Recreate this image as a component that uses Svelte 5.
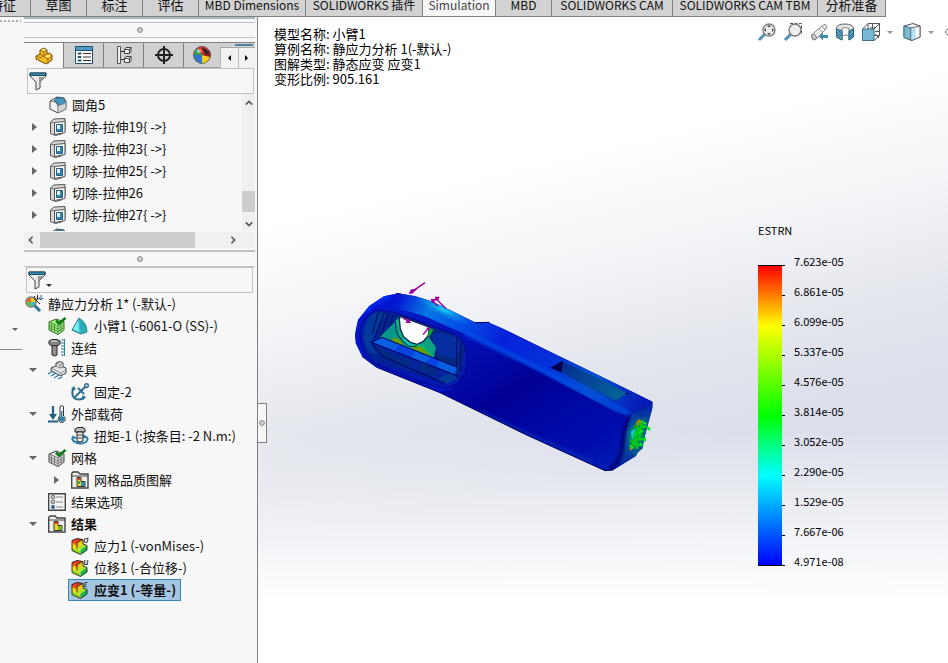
<script>
  const commands = [
    { label: '特征', w: 31, cut: true },
    { label: '草图', w: 56 },
    { label: '标注', w: 56 },
    { label: '评估', w: 56 },
    { label: 'MBD Dimensions', w: 107, latin: true },
    { label: 'SOLIDWORKS 插件', w: 117, latin: true },
    { label: 'Simulation', w: 73, active: true, latin: true },
    { label: 'MBD', w: 56, latin: true },
    { label: 'SOLIDWORKS CAM', w: 121, latin: true },
    { label: 'SOLIDWORKS CAM TBM', w: 145, latin: true },
    { label: '分析准备', w: 68 }
  ];
  const managerTabs = [
    { icon: 'part', name: 'FeatureManager' },
    { icon: 'props', name: 'PropertyManager' },
    { icon: 'config', name: 'ConfigurationManager' },
    { icon: 'target', name: 'DimXpertManager' },
    { icon: 'ball', name: 'DisplayManager' }
  ];
  const features = [
    { label: '圆角5', icon: 'fillet' },
    { label: '切除-拉伸19{ ->}', icon: 'cut', arrow: true },
    { label: '切除-拉伸23{ ->}', icon: 'cut', arrow: true },
    { label: '切除-拉伸25{ ->}', icon: 'cut', arrow: true },
    { label: '切除-拉伸26', icon: 'cut', arrow: true },
    { label: '切除-拉伸27{ ->}', icon: 'cut', arrow: true },
    { label: '', icon: 'fillet' }
  ];
  const study = [
    { label: '静应力分析 1* (-默认-)', level: 0, icons: ['study'] },
    { label: '小臂1 (-6061-O (SS)-)', level: 1, icons: ['meshgreen', 'solid'] },
    { label: '连结', level: 1, icons: ['bolt'] },
    { label: '夹具', level: 1, icons: ['fixture'], arrow: 'down' },
    { label: '固定-2', level: 2, icons: ['anchor'] },
    { label: '外部载荷', level: 1, icons: ['load'], arrow: 'down' },
    { label: '扭矩-1 (:按条目: -2 N.m:)', level: 2, icons: ['torque'] },
    { label: '网格', level: 1, icons: ['mesh'], arrow: 'down' },
    { label: '网格品质图解', level: 2, icons: ['folderq'], arrow: 'right' },
    { label: '结果选项', level: 1, icons: ['options'] },
    { label: '结果', level: 1, icons: ['folder'], arrow: 'down', bold: true },
    { label: '应力1 (-vonMises-)', level: 2, icons: ['plotσ'] },
    { label: '位移1 (-合位移-)', level: 2, icons: ['plotu'] },
    { label: '应变1 (-等量-)', level: 2, icons: ['plotε'], bold: true, selected: true }
  ];
  const scale = ['7.623e-05', '6.861e-05', '6.099e-05', '5.337e-05', '4.576e-05', '3.814e-05', '3.052e-05', '2.290e-05', '1.529e-05', '7.667e-06', '4.971e-08'];
</script>

{#snippet icon(name)}
  <svg class="ico" viewBox="0 0 18 18" aria-hidden="true">
    {#if name === 'part'}
      <path d="M1 9l4-2V3l4-2 3 2v4l2-1 3 2v5l-6 4L1 12z" fill="#f4bd22" stroke="#6e4b0c" />
      <path d="M5 7l4 2.500 4 2.500v5M13 12l4-3M5 3l4 2 3-2M9 5v4l3-2M1 9l4 2 4-2" fill="none" stroke="#9a6a0c" />
      <path d="M6 3l3-1.500L11 3 9 4zM9.500 9L12 8l4 .5-3 2.500z" fill="#ffe680" />
    {:else if name === 'props'}
      <path d="M.5.5h17v17H.5z" fill="#fff" stroke="#24506a" />
      <path d="M1 1h16v3H1z" fill="#4a9cc6" /><path d="M1 4.500h16" stroke="#24506a" />
      <path d="M3 7h3v1H3zM3 10.500h3v1H3zM3 14h3v1H3z" fill="#4a9cc6" stroke="#24506a" />
      <path d="M8 7.500h8M8 11h8M8 14.500h8" stroke="#333" />
    {:else if name === 'config'}
      <path d="M2.500 5.500h7M2.500 13.500h7" stroke="#333" fill="none" />
      <path d="M2.500.5h3v17h-3z" fill="#eee" stroke="#555" />
      <path d="M9.500 3.500l1.500-2h5v4l-1.500 2h-5zM9.500 3.500h5v4M14.500 3.500l1.500-2M9.500 12.500l1.500-2h5v4l-1.500 2h-5zM9.500 12.500h5v4M14.500 12.500l1.500-2" fill="#eee" stroke="#444" />
    {:else if name === 'target'}
      <circle cx="9" cy="9" r="6" fill="none" stroke="#222" stroke-width="2" /><path d="M9 0v18M0 9h18" stroke="#222" stroke-width="2" />
    {:else if name === 'ball'}
      <circle cx="9" cy="9" r="8.500" fill="#2b63b4" />
      <path d="M9 9L4 2A8.500 8.500 0 0 1 16 4z" fill="#e0312a" /><path d="M9 9l7-5a8.500 8.500 0 0 1 0 10z" fill="#8c2020" /><path d="M9 9L4 2a9 9 0 0 0-3 7z" fill="#31a245" /><path d="M9 9L1 9a8.500 8.500 0 0 0 8 8.500z" fill="#3477c8" /><path d="M9 9v8.500A8.500 8.500 0 0 0 17 11z" fill="#f6cc1c" />
      <path d="M9 2q5 0 7 6-5 0-7-6" fill="#222" /><ellipse cx="6" cy="5" rx="2.500" ry="2" fill="#fff" opacity=".5" /><circle cx="9" cy="9" r="8.500" fill="none" stroke="#555" stroke-width=".7" />
    {:else if name === 'fillet'}
      <path d="M1 5l7-4 7 1 2 4v7l-8 4-8-4z" fill="#f1f1f1" stroke="#444" />
      <path d="M8 2l5-.5 4 4-1 2-7 2q0-3-4-5z" fill="#4597be" stroke="#285d78" /><path d="M1 5q7 0 8 5v7" fill="none" stroke="#666" /><path d="M9 10l8-4v7l-8 4z" fill="#bbb" opacity=".55" />
    {:else if name === 'cut'}
      <path d="M1.500 4L5 1l11-.5v12L12.500 16l-6 1.500-5-2z" fill="#d6d6d6" stroke="#555" /><path d="M1.500 4l4 1 .5 12" fill="none" stroke="#777" />
      <path d="M5.500 4.500l10.500-1v11l-10.500 2z" fill="#fdfdfd" stroke="#555" /><path d="M7.500 6.500h6v7h-6z" fill="#2f86b3" stroke="#245f80" /><path d="M8 7h3v4H8z" fill="#e6f3f8" />
    {:else if name === 'study'}
      <path d="M9 10l6 6" stroke="#2e7399" stroke-width="3" /><circle cx="6" cy="7" r="5" fill="#f5cf1a" stroke="#777" stroke-width="1.500" /><path d="M2 7a4 4 0 0 1 4-4v4z" fill="#f06030" /><path d="M6 7h4a4 4 0 0 1-4 4z" fill="#33bccb" /><path d="M2 7h4v4a4 4 0 0 1-4-4" fill="#62c13c" />
      <path d="M9 1l2 4 4 4M11 5l4-2M12.500 0v4" stroke="#222" fill="none" /><path d="M16 0v5M14 3l2 2 2-2" stroke="#24688c" fill="none" />
    {:else if name === 'meshgreen' || name === 'mesh'}
      {@const gray = name === 'mesh'}
      <path d="M1 5l7-3 8 3v8l-6 4.500-9-4.500z" fill={gray ? '#ddd' : '#a8f08c'} stroke={gray ? '#444' : '#347323'} />
      <path d="M1 8l9 4 6-4M1 10.500l9 4 6-4M3.500 6v8M6.500 7v9M10 9v8M13 7v8M1 5l9 4 6-4" fill="none" stroke={gray ? '#666' : '#347f29'} stroke-width=".8" />
      <path d="M8 3.500l3 3 6.500-5.500" fill="none" stroke="#087d12" stroke-width="2.500" />
    {:else if name === 'solid'}
      <path d="M8 1L1 13l9 4 6-2q0-9-8-14" fill="#35c8d2" stroke="#1d6f82" /><path d="M8 1l2 16 6-2Q15 6 8 1" fill="#2aa9b9" /><path d="M7 4l-5 8 6 3z" fill="#83eef0" />
    {:else if name === 'bolt'}
      <path d="M1 2l3-1.500h5L12 2v3L9 7H4L1 5z" fill="#888" stroke="#222" /><path d="M4 7h5v9l-2 1-3-1z" fill="#ddd" stroke="#222" /><path d="M4 9h5M4 11h5M4 13h5M4 15h5" stroke="#444" /><path d="M3 2h6" stroke="#eee" /><path d="M16.500 0v17M13 1h3M13 4h3M13 7h3M13 10h3M13 13h3M13 16h3" stroke="#2e7b9c" />
    {:else if name === 'fixture'}
      <path d="M3 7l5-2V2l4-1.500L15 2v4l3 1v5l-5 3-10-5z" fill="#e4e4e4" stroke="#444" /><path d="M3 7l10 5 5-3M8 5l4 2 3-1M8 2l4 2 3-2M12 4v3M13 12v3" fill="none" stroke="#777" stroke-width=".8" /><path d="M0 13l5-3M3 15l5-3M6 17l5-3M10 18l4-2" stroke="#257aa2" stroke-width="1.200" />
    {:else if name === 'anchor'}
      <path d="M2.500 5Q0 11 3 15q4 3 10 0M3 15L15 3M7 5l6 6" fill="none" stroke="#2b6d91" stroke-width="2" /><circle cx="15.500" cy="2.500" r="1.800" fill="#fff" stroke="#2b6d91" stroke-width="1.500" /><path d="M0 6l3-3 2 4zM11 12l4 2-3 3z" fill="#2b6d91" />
    {:else if name === 'load'}
      <path d="M5 1v10M0 16.500h10" stroke="#225e80" stroke-width="2.200" /><path d="M1 9h8l-4 6z" fill="#225e80" /><path d="M12 2a1.800 1.800 0 0 1 3.500 0v9a3.500 3.500 0 1 1-3.500 0z" fill="#fff" stroke="#333" /><circle cx="13.700" cy="14" r="2.800" fill="#2e82ab" /><path d="M13.700 6v8" stroke="#2e82ab" stroke-width="1.500" />
    {:else if name === 'torque'}
      <path d="M3 9q-4 3 1 6 6 3 11 0 4-4-2-6M1 10l4 1M12 8l2 3" fill="none" stroke="#2980a9" stroke-width="2" /><path d="M4 2l3-1.500h5L14 2v3H4z" fill="#bbb" stroke="#222" /><path d="M6 5h6v9l-3 1-3-1z" fill="#eee" stroke="#222" /><path d="M6 8h6M6 11h6" stroke="#444" />
    {:else if name === 'folder' || name === 'folderq'}
      <path d="M.7 2.500L2 1h5l2 2h8v14H.7z" fill="#eee" stroke="#444" stroke-width="1.400" /><path d="M1 5h16" stroke="#444" /><path d="M6 6.500h4v4h4v5H6z" fill="#f5d520" stroke="#333" /><path d="M6.500 7h3v2h-3z" fill="#e73519" /><path d="M10 11h3.500v4H10z" fill={name === 'folderq' ? '#2993c4' : '#70bc29'} />{#if name === 'folderq'}<path d="M7 10h2v3H7z" fill="#45ac2c" />{/if}
    {:else if name === 'options'}
      <path d="M.7.7h16.600v16.600H.7z" fill="#f3f3f3" stroke="#444" stroke-width="1.400" /><path d="M8 4h7M8 9h7M8 14h7" stroke="#888" /><circle cx="5" cy="4" r="1.800" fill="#ccc" stroke="#666" /><circle cx="5" cy="9" r="1.800" fill="#ccc" stroke="#666" /><circle cx="5" cy="14" r="2" fill="#28658b" />
    {:else if name.startsWith('plot')}
      <path d="M1 3.500L6 1.500l6 1L6 5.500z" fill="#f03818" />
      <path d="M6 5.500l6-3V7l-6 4.500z" fill="#f2c516" />
      <path d="M1 3.500l5 2v6l3.500 1.500v4.500L1 13.500z" fill="#f5dc16" />
      <path d="M1 3.500l5 2v2l-5-2z" fill="#ee3214" /><path d="M1 5.500l5 2v1.500l-5-2z" fill="#f49014" /><path d="M1 10.500l8.500 4v3L1 13.500z" fill="#8ddc1e" />
      <path d="M6 11.500L12 7l4 1.500-6.500 4.500z" fill="#a5e61c" /><path d="M9.500 13L16 8.500v4.500l-6.500 4.500z" fill="#18b444" />
      <path d="M1 3.500L6 1.500l6 1V7l4 1.500V13l-6.500 4.500L1 13.500zM6 11.500V5.500l6-3" fill="none" stroke="#222" stroke-width=".9" />
      <text x="12.500" y="6" class="greek">{name.slice(4)}</text>
    {:else if name === 'funnel'}
      <path d="M1 1h16v3l-6 6v6l-4 2v-8L1 4z" fill="#e9e9e9" stroke="#444" /><path d="M1 1h16v2.500H1z" fill="#3c8fb8" stroke="#174c65" /><path d="M10 5v11l1-1v-5l5-5z" fill="#999" />
    {:else if name === 'zoomfit' || name === 'zoomarea'}
      {#if name === 'zoomarea'}<path d="M6 .5h11.500V12" fill="none" stroke="#555" stroke-dasharray="3 1.500" />{/if}
      <path d="M1 17l6-6" stroke="#4e93b6" stroke-width="3" /><circle cx="11" cy="7" r="6" fill="#eee" stroke="#777" stroke-width="1.300" />
      {#if name === 'zoomfit'}<path d="M11 2l2 2H9zM11 12l2-2H9zM6 7l2-2v4zM16 7l-2-2v4z" fill="#444" />{/if}
    {:else if name === 'prev'}
      <path d="M1.500 12L12 3l3-2 2 3-2 3-9 9-3 1z" fill="#f2f2f2" stroke="#888" /><path d="M9 6l3 3M12 3l3 4" stroke="#999" /><ellipse cx="4" cy="14" rx="2" ry="3" fill="#ccc" stroke="#888" transform="rotate(-35 4 14)" /><path d="M9 13.500l4-4v2.500h5v3h-5v2.500z" fill="#428caf" />
    {:else if name === 'section'}
      <path d="M.5 5q1-4 8.500-4t8.500 4v9L13 17V7H6v10L.5 14z" fill="#e2e2e2" stroke="#666" /><path d="M6 5.500q3-2 7 0V13l-3-1-4 1z" fill="#f5f5f5" stroke="#888" /><path d="M.5 6L6 8v9l-5.500-3zM13 8l4.500-2v8L13 17z" fill="#67a9c8" stroke="#286887" /><path d="M1 10l4-3M1 13l5-4M2 15l4-4M13 11l4-4M13 14l4-4M14 15l3-3" stroke="#1c5977" stroke-width=".8" />
    {:else if name === 'orient'}
      <path d="M.5 6L6 .5h11.500v12L12 17.500M12 6l5.500-5.500M6 .5V6M10.500 1v5M8 4l2.500 2L13 4M12 12.500h5.500M13 8.500h4M13 11l4 4" fill="none" stroke="#555" /><path d="M.5 6h11.500v11.500H.5z" fill="#7ab9d6" stroke="#386f89" />
    {:else if name === 'display'}
      <path d="M1 3l9-2.500 7 2.500v11l-8 3.500-8-3z" fill="#eee" stroke="#555" /><path d="M1 3l7 2v12l-7-2.500z" fill="#7cbad6" stroke="#3c748e" /><path d="M8 5l9-2v11l-9 3.500z" fill="#f8f8f8" stroke="#666" /><path d="M8.500 5.500l4-1v11l-4 1.500z" fill="#b5def0" />
    {/if}
  </svg>
{/snippet}

<div class="app">
  <nav class="commands" aria-label="CommandManager">
    {#each commands as c}
      <button class:active={c.active} class:cut={c.cut} class:latin={c.latin} style:width="{c.w}px">{c.label}</button>
    {/each}
  </nav>
  <div class="work">
    <aside class="gutter">
      <div class="grip"></div>
      <i class="tri down"></i>
      <div class="rule"></div>
    </aside>
    <section class="panel">
      <div class="topline"></div>
      <div class="splitter first"><i></i></div>
      <div class="mtabs">
        {#each managerTabs as t, i}
          <button class:active={i === 0} aria-label={t.name}>{@render icon(t.icon)}</button>
        {/each}
        <div class="more"><span class="peek"></span>
          <div class="arrows"><button aria-label="Previous tab"><i class="tri left"></i></button><button aria-label="Next tab"><i class="tri right dark"></i></button></div>
        </div>
      </div>
      <label class="filter upper">{@render icon('funnel')}<input aria-label="Filter features" /></label>
      <div class="featurebox">
        <ul class="features">
          {#each features as f}
            <li>
              <span class="twist">{#if f.arrow}<i class="tri right"></i>{/if}</span>
              <button class="item">{@render icon(f.icon)}<span>{f.label}</span></button>
            </li>
          {/each}
        </ul>
        <div class="vbar">
          <svg viewBox="0 0 10 6"><path d="M1 5l4-4 4 4" /></svg>
          <div class="thumb"></div>
          <svg viewBox="0 0 10 6"><path d="M1 1l4 4 4-4" /></svg>
        </div>
      </div>
      <div class="hbar">
        <svg viewBox="0 0 6 10"><path d="M5 1L1 5l4 4" /></svg>
        <div class="thumb"></div>
        <svg viewBox="0 0 6 10"><path d="M1 1l4 4-4 4" /></svg>
      </div>
      <div class="splitter second"><i></i></div>
      <label class="filter lower">{@render icon('funnel')}<i class="tri down dark"></i><input aria-label="Filter study" /></label>
      <ul class="study">
        {#each study as s}
          <li class="l{s.level}">
            {#if s.level}<span class="twist">{#if s.arrow}<i class="tri {s.arrow}"></i>{/if}</span>{/if}
            <button class="item" class:bold={s.bold} class:selected={s.selected}>
              {#each s.icons as n}{@render icon(n)}{/each}<span>{s.label}</span>
            </button>
          </li>
        {/each}
      </ul>
    </section>
    <main class="view">
      <button class="handle" aria-label="Collapse panel"><i></i></button>
      <div class="info">
        <div>模型名称: 小臂1</div>
        <div>算例名称: 静应力分析 1(-默认-)</div>
        <div>图解类型: 静态应变 应变1</div>
        <div>变形比例: 905.161</div>
      </div>
      <div class="hud">
        <button aria-label="Zoom to fit">{@render icon('zoomfit')}</button>
        <button aria-label="Zoom to area">{@render icon('zoomarea')}</button>
        <button aria-label="Previous view">{@render icon('prev')}</button>
        <button aria-label="Section view">{@render icon('section')}</button>
        <button class="menu" aria-label="View orientation">{@render icon('orient')}<i class="tri down"></i></button>
        <button class="menu" aria-label="Display style">{@render icon('display')}<i class="tri down"></i></button>
        <button aria-label="Hide or show items"><svg class="ico" viewBox="0 0 18 18"><path d="M1 9l4-5h8l4 5-4 5H5z" fill="#eee" stroke="#888" /><circle cx="9" cy="9" r="3" fill="#4c97bc" /></svg></button>
      </div>

      <svg class="model" viewBox="0 0 990 630" role="img" aria-label="应变1">
        <defs>
          <linearGradient id="front" x1="0" y1="0" x2="1" y2="1"><stop offset="0" stop-color="#0526dc" /><stop offset=".32" stop-color="#0512b8" /><stop offset=".55" stop-color="#000096" /><stop offset=".8" stop-color="#000eae" /><stop offset="1" stop-color="#0030ae" /></linearGradient>
          <linearGradient id="top" gradientUnits="userSpaceOnUse" x1="180" y1="70" x2="900" y2="420"><stop offset="0" stop-color="#0516d2" /><stop offset=".12" stop-color="#0876e4" /><stop offset=".25" stop-color="#0350e6" /><stop offset=".42" stop-color="#0523da" /><stop offset=".62" stop-color="#0530da" /><stop offset=".8" stop-color="#0554cf" /><stop offset="1" stop-color="#0519b6" /></linearGradient>
          <linearGradient id="slot" x1="0" y1="0" x2="1" y2=".5"><stop offset="0" stop-color="#032c91" /><stop offset="1" stop-color="#06609a" /></linearGradient>
          <linearGradient id="end" x1="0" y1="0" x2="0" y2="1"><stop offset="0" stop-color="#0418a8" /><stop offset=".45" stop-color="#046b96" /><stop offset="1" stop-color="#0319a1" /></linearGradient>
          <radialGradient id="hot"><stop offset="0" stop-color="#14dcec" /><stop offset="1" stop-color="#067ee4" stop-opacity="0" /></radialGradient>
          <filter id="soft"><feGaussianBlur stdDeviation="5" /></filter>
          <clipPath id="body"><path d="M45 192L54 150 88 108 132 79 175 70 225 78 275 94 330 120 405 157 445 157 490 176 640 250 730 293 862 358 938 395 938 412 914 500 888 558 820 600 795 602 560 495 300 368 110 292 66 258 47 220Z" /></clipPath>
        </defs>
        <g clip-path="url(#body)">
          <path d="M0 0h990v630H0z" fill="url(#front)" />
          <path d="M45 190L54 145 88 105 132 79 175 70 225 78 275 94 330 120 405 157 445 157 640 250 862 358 940 398 870 437 830 427 640 326 500 252 370 190 250 137 160 112 105 119 65 155Z" fill="url(#top)" />
          <ellipse cx="310" cy="119" rx="95" ry="22" transform="rotate(26 310 119)" fill="url(#hot)" />
          <path d="M45 200Q58 278 115 288L300 367 340 355 245 340 100 280 65 230 70 158" fill="#0516c4" />
          <path d="M375 188L610 302 868 432" fill="none" stroke="#064be0" stroke-width="16" filter="url(#soft)" opacity=".8" />
          <path d="M150 77Q100 88 72 125" fill="none" stroke="#0529ef" stroke-width="18" filter="url(#soft)" />
          <path d="M870 437L938 398V412L914 500 888 558 820 601Q844 565 850 510Z" fill="url(#end)" />
          <path d="M868 438Q852 470 848 530 840 580 805 602" fill="none" stroke="#000075" stroke-width="12" filter="url(#soft)" />
          <path d="M420 430L600 510 760 580" fill="none" stroke="#0838b8" stroke-width="20" opacity=".45" filter="url(#soft)" />
        </g>
        <path d="M60 198Q56 148 105 121 145 117 195 138L345 194Q383 215 382 274 372 350 315 354 270 352 105 280 66 253 60 198Z" fill="#0518af" stroke="#000070" stroke-width="2" />
        <path d="M69 204Q66 160 92 137 120 116 181 136L337 193Q366 216 373 276L355 323 310 338 105 275Q75 250 69 204Z" fill="#032392" />
        <path d="M92 137L112 125 140 132 92 218 110 253 85 244Q52 192 92 137Z" fill="#003b9b" /><path d="M115 125L97 190M133 130L104 203M145 132L122 199M160 135l-10 35" stroke="#001462" stroke-width="4" />
        <path d="M120 200L165 156 178 205 225 230 265 200 288 232 281 263 181 231Z" fill="#079585" />
        <path d="M166 152L181 140 188 190 220 220 257 214 285 259 213 241 175 194Z" fill="#08b27c" /><path d="M160 202l22 7 10 20-35-12zM210 225l36 7 34 31-56-23z" fill="#69a000" /><path d="M187 206l29 3 24 17-34 1z" fill="#0ac7ae" /><path d="M244 215l20-15 24 34-10 28z" fill="#09a17f" />
        <path d="M265 172L350 198 375 235 353 315 285 262 288 230 266 199Z" fill="#04277f" /><path d="M305 188l39 12 25 34-28 35-45-17-23-60z" fill="#052fa1" /><path d="M350 200V295M362 218V302" stroke="#000969" stroke-width="3" />
        <path d="M94 217L126 202 352 292 345 315Z" fill="#0644df" /><path d="M126 202l53 22-18 20-65-25zM225 240l50 20-32 30-32-15zM301 271l48 21-5 21-55-23z" fill="#075ee0" />
        <path d="M94 217L345 315 356 325 329 340 140 270Z" fill="#0522a0" /><path d="M103 225l60 32 52 13-8 22-67-22zM242 275l51 23-10 21-50-18z" fill="#032b83" /><path d="M329 309l27 17-34 15-30-14z" fill="#043a98" />
        <path d="M94 217L126 202 352 292M94 217L345 315 358 325M94 217L125 257 310 340" fill="none" stroke="#00005a" stroke-width="3" />
        <path d="M178 148L181 139 270 172 264 198 249 215 232 223 211 217 191 200 181 178Z" fill="#fff" stroke="#002653" stroke-width="4" /><path d="M166 154Q163 203 208 229L230 229" fill="none" stroke="#002b65" stroke-width="3" />
        <path d="M265 172l16 7-17 27z" fill="#00a81f" />
        <path d="M632 293L668 272 665 307 828 392 862 370 668 276" fill="#020b67" /><path d="M668 274L862 370 828 392 665 307Z" fill="url(#slot)" /><path d="M632 293L668 272 665 308Z" fill="#00004d" />
        <path d="M405 158L448 157M855 370l13 2M168 70l15 2" stroke="#000068" stroke-width="3" />
        <path d="M66 259L110 292 300 368 560 495 795 602 820 600" fill="none" stroke="#000064" stroke-width="3" />
        <path d="M900 446l20-6-4 50-8 45-25 23-14-18 3-48z" fill="#04568b" /><ellipse cx="891" cy="494" rx="20" ry="45" transform="rotate(15 891 494)" fill="#078f4c" /><path d="M888 455l12-9 5 15-14 8zM872 528l9-3-6 16-8-2z" fill="#a48205" /><path d="M873 484l14-7-1 19-10 13z" fill="#17c6d4" />
        <g stroke="#00d019" stroke-width="5" fill="none"><path d="M896 460l33 17M888 479l31-12M879 497l34 13M889 510l28-3M875 521l33 3M895 480l-15 40M905 462l-10 36M897 524l-7 12M887 468l16 18M883 491l22 5M874 511l15 18M884 484l6 40" /><path d="M928 472v10M903 453l17 10M915 502v13M903 519v10M868 526l12 8M898 490l10-10" stroke="#05ef23" /></g>
        <g stroke="#9c00a5" stroke-width="4" fill="#9c00a5"><path d="M255 38L216 65M318 116L289 87M293 108L279 94M187 142L205 154M249 194L266 174" /><path d="M209 69L214 60 228 58 216 69ZM287 82h9l-2 6-6 2zM275 89h8l-2 6-4 2zM200 157l6-7 4 7zM262 175l5-2-1 7z" /></g>
      </svg>

      <div class="legend">
        <div class="ltitle">ESTRN</div>
        <div class="lbody">
          <div class="bar"></div>
          <ol>{#each scale as v}<li><i></i><span>{v}</span></li>{/each}</ol>
        </div>
      </div>
    </main>
  </div>
</div>

<style>
  :global(body) { margin: 0; }
  .app { height: 100vh; min-height: 600px; display: flex; flex-direction: column; overflow: hidden; background: #fff; color: #111; font: 13px/22px 'Noto Sans CJK SC', sans-serif; }
  button { font: inherit; color: inherit; border: 0; padding: 0; background: none; }
  ul, ol { list-style: none; margin: 0; padding: 0; }
  .ico { width: 18px; height: 18px; flex: none; display: block; overflow: visible; }
  .greek { font: italic 10px 'Liberation Serif', serif; fill: #000; }
  .commands { display: flex; height: 17px; flex: none; align-items: flex-end; overflow: hidden; background: #fff; }
  .commands button { box-sizing: border-box; flex: none; height: 23px; background: #d2d2d2; border-right: 1px solid #808080; border-bottom: 1px solid #808080; line-height: 22px; white-space: nowrap; overflow: hidden; }
  .commands .latin { font-size: 12px; }
  .commands .active { background: #f7f7f7; color: #444; }
  .commands .cut { display: flex; justify-content: flex-end; padding-right: 14px; }
  .work { flex: 1; display: flex; min-height: 0; }
  .gutter { width: 24px; flex: none; background: #f7f7f7; display: flex; flex-direction: column; }
  .grip { height: 2px; width: 21px; margin-top: 3px; background: repeating-linear-gradient(90deg, #aaa 0 2px, transparent 2px 4px); }
  .gutter .tri { margin: 306px 0 0 12px; }
  .rule { height: 1px; width: 22px; margin-top: 18px; background: #888; }
  .panel { width: 231px; flex: none; display: flex; flex-direction: column; background: #f7f7f7; border-right: 2px solid #f7f7f7; }
  .topline { height: 2px; background: #a3b9bd; margin-bottom: 3px; }
  .splitter { display: flex; align-items: center; justify-content: center; height: 14px; border-top: 1px solid #c2c2c2; border-bottom: 1px solid #c2c2c2; }
  .splitter i, .handle i { width: 4px; height: 4px; border: 1px solid #909090; border-radius: 50%; background: #ccc; }
  .first { margin-bottom: 4px; }
  .second { border-top: 2px solid #c2c2c2; margin-top: 2px; }
  .mtabs { display: flex; height: 25px; border-top: 1px solid #808080; }
  .mtabs > button { box-sizing: border-box; width: 40px; flex: 0 1 40px; display: flex; align-items: center; justify-content: center; background: #d0d0d0; border-right: 1px solid #808080; border-bottom: 1px solid #999; }
  .mtabs > .active { background: #f7f7f7; border-bottom: 0; }
  .mtabs > button:nth-child(5) { flex-basis: 36px; border-right: 0; }
  .more { flex: 1; min-width: 0; background: #d0d0d0; display: flex; flex-direction: column; justify-content: flex-end; align-items: flex-end; }
  .peek { width: 18px; height: 2px; margin-right: 2px; background: #4d83a0; }
  .arrows { display: flex; width: 100%; height: 20px; margin-top: 1px; background: #f2f2f2; border-top: 1px solid #aaa; }
  .arrows button { flex: 1; display: flex; align-items: center; justify-content: center; border-left: 1px solid #bbb; }
  .filter { display: flex; align-items: center; box-sizing: border-box; height: 26px; border: 1px solid #c2c2c2; padding-left: 1px; }
  .filter input { flex: 1; min-width: 0; border: 0; background: none; outline: 0; }
  .upper { margin: 0 1px 0 3px; }
  .lower { margin: 0 2px; }
  .lower .tri { margin-top: 10px; }
  .tri { flex: none; width: 0; height: 0; border: 3px solid transparent; }
  .tri.down { border-top-color: #666; border-bottom: 0; }
  .tri.right { border: 4px solid transparent; border-left: 5px solid #666; border-right: 0; }
  .tri.right.dark { border: 3px solid transparent; border-left-color: #000; border-right: 0; }
  .tri.left { border-left: 0; border-right-color: #000; }
  .tri.down.dark { border-top-color: #333; }
  .featurebox { display: flex; height: 137px; }
  .features { flex: 1; overflow: hidden; padding-left: 2px; }
  .features li, .study li { display: flex; align-items: center; height: 22px; }
  .twist { width: 23px; flex: none; display: flex; align-items: center; padding-left: 6px; box-sizing: border-box; }
  .study .tri.down { border-width: 4px 4px 0; margin-left: -2px; }
  .item { box-sizing: border-box; height: 22px; display: flex; align-items: center; gap: 5px; padding: 0 4px 0 2px; border: 1px solid transparent; line-height: 20px; margin-left: -3px; white-space: nowrap; }
  .bold { font-weight: 700; }
  .selected { background: #a5c6e3; border-color: #3a84b5; }
  .study { padding-left: 1px; }
  .l2 { padding-left: 23px; }
  .vbar { width: 13px; background: #f0f0f0; display: flex; flex-direction: column; align-items: center; padding: 6px 0 4px; box-sizing: border-box; }
  .vbar svg { width: 8px; height: 6px; flex: none; }
  .vbar svg, .hbar svg { fill: none; stroke: #555; stroke-width: 2; }
  .vbar .thumb { width: 13px; height: 21px; margin-top: auto; margin-bottom: 9px; background: #cdcdcd; }
  .hbar { height: 16px; margin-top: 1px; background: #f0f0f0; display: flex; align-items: center; padding: 0 19px 0 4px; }
  .hbar svg { width: 6px; height: 8px; flex: none; }
  .hbar .thumb { width: 155px; height: 16px; margin-left: 6px; margin-right: auto; background: #cdcdcd; }
  .view { position: relative; flex: 1; min-width: 0; overflow: hidden; border-left: 1px solid #808080; background: linear-gradient(180deg, transparent 64%, #fff 91%), linear-gradient(167deg, #fff 26%, #f3f4f7 40%, #e1e4ec 56%, #dcdfea 66%, #e0e4ed 100%); }
  .handle { position: absolute; left: -1px; top: 386px; width: 9px; height: 38px; box-sizing: content-box; display: flex; align-items: center; justify-content: center; background: #f7f7f7; border: 1px solid #808080; border-left: 0; }
  .info { position: absolute; left: 16px; top: 9px; line-height: 15px; color: #000; white-space: nowrap; }
  .hud { position: absolute; right: -14px; top: 6px; display: flex; gap: 8px; }
  .hud .menu { display: flex; align-items: center; gap: 7px; margin-right: 2px; }
  .hud .tri { opacity: .7; }
  .model { position: absolute; left: 82px; top: 253px; width: 330px; height: 210px; }
  .legend { position: absolute; right: 104px; top: 203px; width: 86px; color: #000; white-space: nowrap; font: 11px/20px 'Noto Sans CJK SC', sans-serif; }
  .lbody { display: flex; padding-top: 25px; }
  .bar { width: 24px; height: 299px; flex: none; border-top: 1px solid #000; border-bottom: 1px solid #000; background: linear-gradient(red, #ff0 20%, #0f0 50%, #0ff 70%, #00f); }
  ol li { display: flex; height: 30px; align-items: flex-start; gap: 9px; }
  ol li i { width: 3px; height: 1px; background: #000; }
  ol { height: 301px; }
  ol li span { margin-top: -14px; }
</style>
